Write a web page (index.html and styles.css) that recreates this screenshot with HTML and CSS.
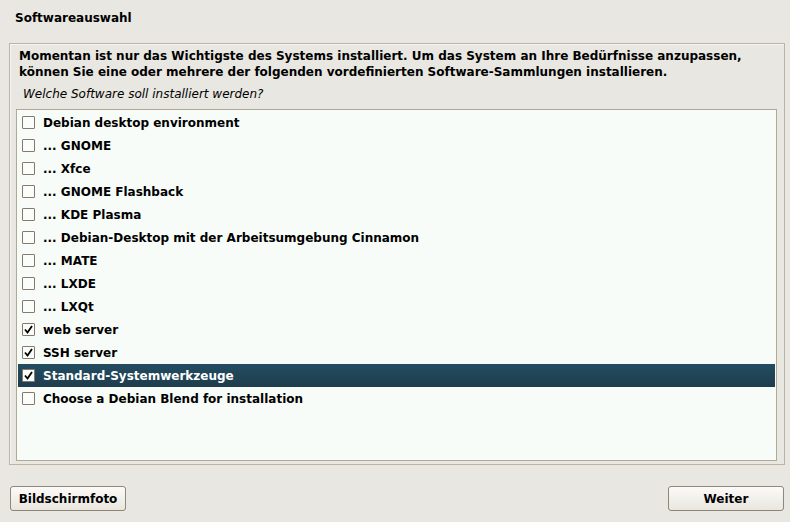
FILE: index.html
```html
<!DOCTYPE html>
<html lang="de">
<head>
    <meta charset="UTF-8">
    <title>Softwareauswahl</title>
    <link rel="stylesheet" href="styles.css">
</head>
<body>
    <div class="window">
        <h1 class="title">Softwareauswahl</h1>

        <div class="frame">
            <p class="intro">Momentan ist nur das Wichtigste des Systems installiert. Um das System an Ihre Bedürfnisse anzupassen, können Sie eine oder mehrere der folgenden vordefinierten Software-Sammlungen installieren.</p>
            <p class="question">Welche Software soll installiert werden?</p>

            <ul class="list">
                <li class="row"><span class="box"></span>Debian desktop environment</li>
                <li class="row"><span class="box"></span>... GNOME</li>
                <li class="row"><span class="box"></span>... Xfce</li>
                <li class="row"><span class="box"></span>... GNOME Flashback</li>
                <li class="row"><span class="box"></span>... KDE Plasma</li>
                <li class="row"><span class="box"></span>... Debian-Desktop mit der Arbeitsumgebung Cinnamon</li>
                <li class="row"><span class="box"></span>... MATE</li>
                <li class="row"><span class="box"></span>... LXDE</li>
                <li class="row"><span class="box"></span>... LXQt</li>
                <li class="row"><span class="box"><svg viewBox="0 0 11 11" width="11" height="11"><polyline points="2,5.5 4.5,8.5 9,2" fill="none" stroke="#000" stroke-width="1.8"/></svg></span>web server</li>
                <li class="row"><span class="box"><svg viewBox="0 0 11 11" width="11" height="11"><polyline points="2,5.5 4.5,8.5 9,2" fill="none" stroke="#000" stroke-width="1.8"/></svg></span>SSH server</li>
                <li class="row selected"><span class="box"><svg viewBox="0 0 11 11" width="11" height="11"><polyline points="2,5.5 4.5,8.5 9,2" fill="none" stroke="#000" stroke-width="1.8"/></svg></span>Standard-Systemwerkzeuge</li>
                <li class="row"><span class="box"></span>Choose a Debian Blend for installation</li>
            </ul>
        </div>

        <div class="buttons">
            <button class="btn">Bildschirmfoto</button>
            <button class="btn btn-wide">Weiter</button>
        </div>
    </div>
</body>
</html>
```

FILE: styles.css
```css
html, body {
    margin: 0;
    padding: 0;
}

body {
    width: 790px;
    height: 522px;
    background-color: #e8e7e1;
    font-family: "DejaVu Sans", sans-serif;
    font-size: 12px;
    color: #000;
    overflow: hidden;
}

.window {
    display: flex;
    flex-direction: column;
    height: 100%;
}

.title {
    margin: 0;
    padding: 10px 15px 0;
    height: 43px;
    box-sizing: border-box;
    font-size: 12px;
    line-height: 16px;
    font-weight: bold;
}

.frame {
    margin: 0 5px 0 9px;
    height: 422px;
    box-sizing: border-box;
    border: 1px solid #bcb3a4;
    box-shadow: inset 1px 1px 0 #f6f5f1;
    padding: 4px 7px 3px 6px;
    display: flex;
    flex-direction: column;
}

.intro {
    margin: 0 0 0 3px;
    font-weight: bold;
    line-height: 16px;
}

.question {
    margin: 5px 0 0 7px;
    font-style: italic;
    font-size: 12px;
    line-height: 19px;
    height: 24px;
}

.list {
    list-style: none;
    margin: 0;
    padding: 1px;
    flex: 1;
    border: 1px solid #b2a893;
    background-color: #f7fcf8;
}

.row {
    display: flex;
    align-items: center;
    gap: 8px;
    height: 23px;
    padding-left: 4px;
    font-weight: bold;
    white-space: nowrap;
}

.row.selected {
    background: linear-gradient(#234c61, #1e3d4d);
    color: #fff;
}

.box {
    display: flex;
    align-items: center;
    justify-content: center;
    width: 13px;
    height: 13px;
    box-sizing: border-box;
    border: 1px solid #857a69;
    background-color: #fbfdfb;
    border-radius: 1px;
}

.buttons {
    display: flex;
    justify-content: space-between;
    padding: 21px 6px 0 10px;
}

.btn {
    width: 116px;
    height: 25px;
    font-family: "DejaVu Sans", sans-serif;
    font-size: 12px;
    font-weight: bold;
    color: #000;
    border: 1px solid #8f8777;
    border-radius: 3px;
    background: linear-gradient(#fbfaf8, #e9e6df);
    padding: 0;
    cursor: pointer;
}
```
